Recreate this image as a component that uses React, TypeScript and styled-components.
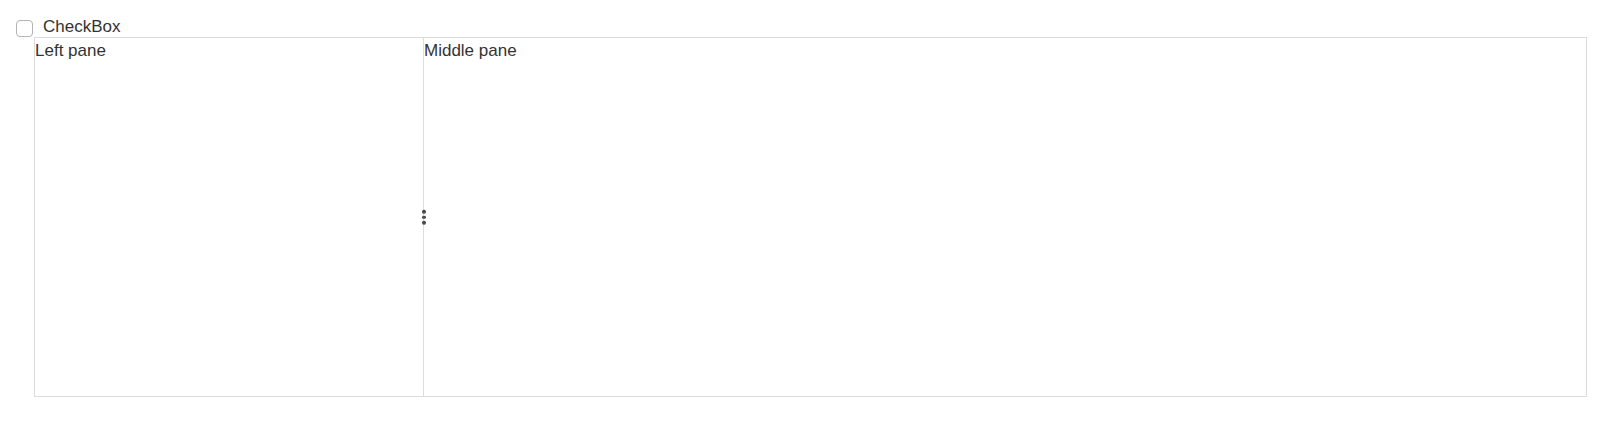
import styled, { createGlobalStyle } from "styled-components";

const GlobalStyle = createGlobalStyle`
  body {
    margin: 0;
    background: #ffffff;
    font-family: "Liberation Sans", Arial, sans-serif;
    font-size: 17px;
    color: #333333;
  }
`;

const Page = styled.div`
  padding: 19px 22px 0 16px;
`;

const CheckRow = styled.label`
  display: flex;
  align-items: center;
  height: 18px;
  gap: 10px;
  line-height: 18px;
  cursor: pointer;
`;

const Caption = styled.span`
  margin-top: -2px;
`;

const Box = styled.span`
  box-sizing: border-box;
  width: 17px;
  height: 17px;
  border: 1px solid #b3b3b3;
  border-radius: 4px;
  background: #fff;
  flex: none;
`;

const Splitter = styled.div`
  box-sizing: border-box;
  margin-left: 18px;
  height: 360px;
  border: 1px solid #dcdcdc;
  display: flex;
`;

const Pane = styled.div<{ $width?: number }>`
  flex: ${(p) => (p.$width ? `0 0 ${p.$width}px` : "1 1 auto")};
  line-height: 24px;
  padding-top: 1px;
  overflow: hidden;
`;

const Bar = styled.div`
  position: relative;
  flex: 0 0 1px;
  background: #dcdcdc;
`;

const Grip = styled.div`
  position: absolute;
  left: -1px;
  top: 50%;
  transform: translateY(-50%);
  display: flex;
  flex-direction: column;
  gap: 2px;
`;

const Dot = styled.span`
  width: 3.5px;
  height: 3.5px;
  border-radius: 50%;
  background: #4a4a4a;
`;

export default function App() {
  return (
    <>
      <GlobalStyle />
      <Page>
        <CheckRow>
          <Box />
          <Caption>CheckBox</Caption>
        </CheckRow>
        <Splitter>
          <Pane $width={388}>Left pane</Pane>
          <Bar>
            <Grip>
              <Dot />
              <Dot />
              <Dot />
            </Grip>
          </Bar>
          <Pane>Middle pane</Pane>
        </Splitter>
      </Page>
    </>
  );
}
